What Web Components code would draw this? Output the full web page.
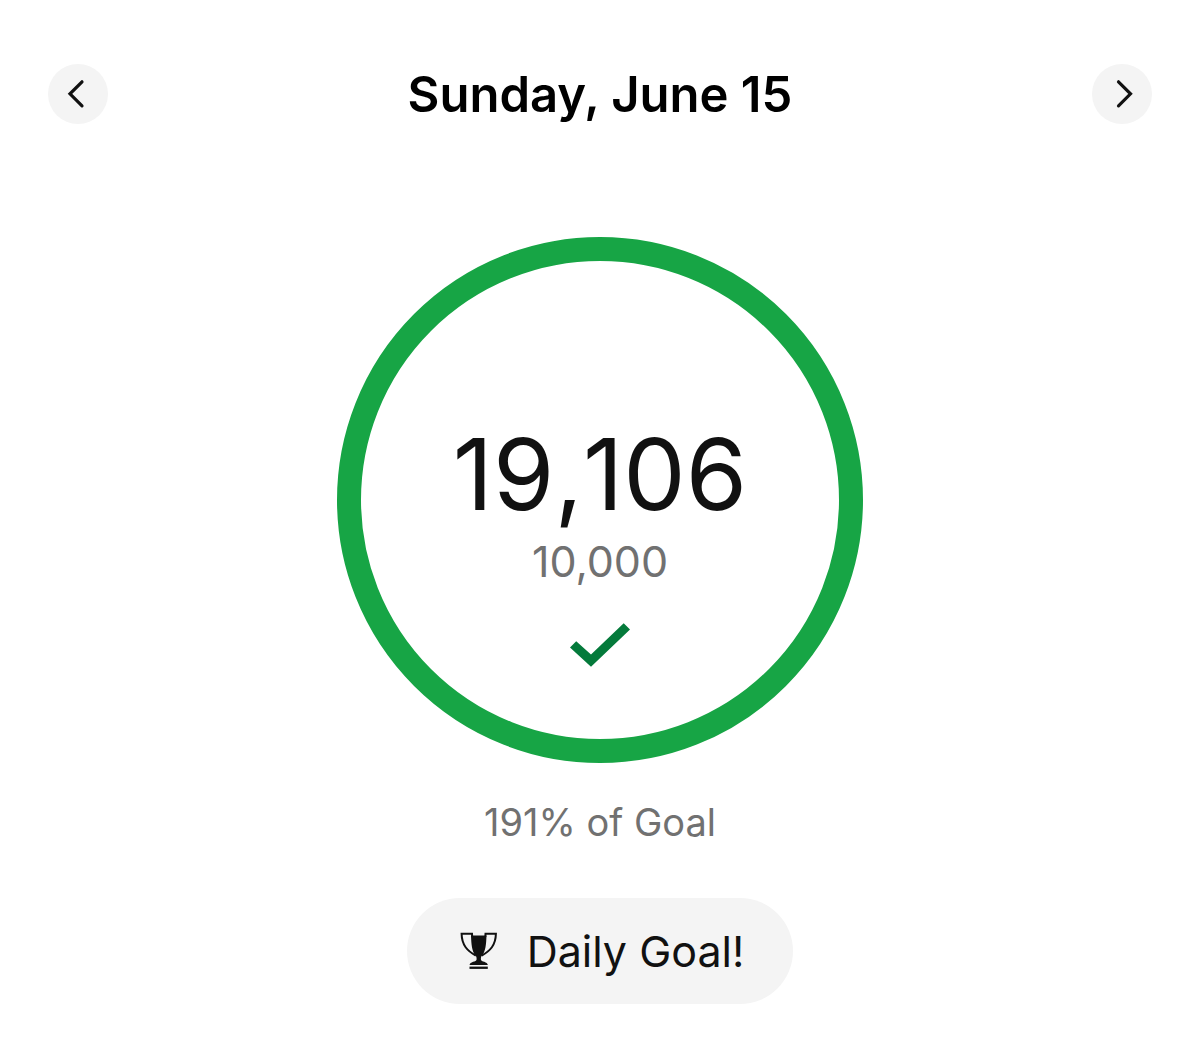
<!DOCTYPE html>
<html lang="en">
<head>
<meta charset="utf-8">
<meta name="viewport" content="width=device-width, initial-scale=1">
<title>Daily Steps</title>
<style>
  body { margin: 0; background: #fff; color: #111; font-family: Inter, "Liberation Sans", sans-serif; }
</style>
</head>
<body>
<step-day>
  <day-header slot="header">Sunday, June 15</day-header>
  <goal-ring>19,106<span slot="goal">10,000</span></goal-ring>
  <goal-percent>191% of Goal</goal-percent>
  <goal-badge>Daily Goal!</goal-badge>
</step-day>
<script>
  const define = (name, html) => customElements.define(name, class extends HTMLElement {
    constructor() {
      super();
      this.attachShadow({ mode: "open" }).innerHTML = html;
    }
  });

  define("step-day", `
    <style>
      :host { display: block; padding: 64px 48px 32px; }
      main { display: flex; flex-direction: column; align-items: center; padding-top: 113px; }
    </style>
    <slot name="header"></slot>
    <main><slot></slot></main>`);

  define("day-header", `
    <style>
      :host { display: block; }
      header { display: flex; align-items: flex-start; justify-content: space-between; height: 60px; }
      h1 { margin: 0; font-size: 49px; line-height: 62px; font-weight: 600; color: #000; }
      button { width: 60px; height: 60px; padding: 0; border: 0; border-radius: 50%; background: #f4f4f4; color: #111; cursor: pointer; }
      svg { display: block; fill: none; stroke: currentColor; stroke-width: 3.2; stroke-linecap: round; }
    </style>
    <header>
      <button type="button" aria-label="Previous day"><svg width="60" height="60" viewBox="0 0 60 60"><path d="M34 17.8 22 29.8 34 41.8"/></svg></button>
      <h1><slot></slot></h1>
      <button type="button" aria-label="Next day"><svg width="60" height="60" viewBox="0 0 60 60"><path d="M26.5 17.8 38.5 29.8 26.5 41.8"/></svg></button>
    </header>`);

  define("goal-ring", `
    <style>
      :host { display: flex; flex-direction: column; align-items: center; box-sizing: border-box;
        width: 526px; height: 526px; padding-top: 163px; border: 24px solid #17a545; border-radius: 50%; }
      .count { font-size: 99px; line-height: 100px; font-kerning: none; }
      .goal { font-size: 43px; line-height: 52px; margin-top: 11px; color: #717171; }
      svg { display: block; margin-top: 36px; fill: #047a3b; }
    </style>
    <div class="count"><slot></slot></div>
    <div class="goal"><slot name="goal"></slot></div>
    <svg width="60" height="44" viewBox="0 0 60 44" role="img" aria-label="Goal reached"><path d="M0 24.5 6.2 18.2 21 31.5 53.7.3 60 6.5 21 43.7Z"/></svg>`);

  define("goal-percent", `
    <style>
      :host { display: block; margin-top: 35px; font-size: 38px; line-height: 48px; color: #717171; }
    </style>
    <slot></slot>`);

  define("goal-badge", `
    <style>
      :host { display: flex; align-items: center; gap: 29px; margin-top: 52px; padding: 27px 49px 27px 53px;
        border-radius: 54px; background: #f4f4f4; font-size: 43px; line-height: 52px; }
      svg { display: block; }
    </style>
    <svg width="38" height="38" viewBox="0 0 38 38" aria-hidden="true">
      <path d="M11 3.6H26.5C26.2 12 25.6 19.8 22.2 23.2 20.9 24.6 20.9 25.5 20.9 27.4 20.9 29.8 27.8 29.4 27.8 33H9.6C9.6 29.4 16.6 29.8 16.6 27.4 16.6 25.5 16.6 24.6 15.3 23.2 11.9 19.8 11.3 12 11 3.6Z" fill="#111"/>
      <path d="M12.2 5 12 1.8H1.6C1.8 13.3 7.4 18.8 15.8 23.6M25.3 5 25.5 1.8H35.9C35.7 13.3 30.1 18.8 21.7 23.6" fill="none" stroke="#111" stroke-width="2"/>
      <path d="M9.5 34.6H27.8V36.9H9.5Z" fill="#111"/>
    </svg>
    <slot></slot>`);
</script>
</body>
</html>
